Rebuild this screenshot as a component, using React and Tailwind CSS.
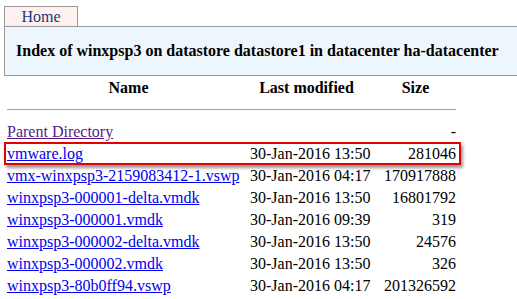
import React from "react";

const rows = [
  { name: "vmx-winxpsp3-2159083412-1.vswp", date: "30-Jan-2016 04:17", size: "170917888" },
  { name: "winxpsp3-000001-delta.vmdk", date: "30-Jan-2016 13:50", size: "16801792" },
  { name: "winxpsp3-000001.vmdk", date: "30-Jan-2016 09:39", size: "319" },
  { name: "winxpsp3-000002-delta.vmdk", date: "30-Jan-2016 13:50", size: "24576" },
  { name: "winxpsp3-000002.vmdk", date: "30-Jan-2016 13:50", size: "326" },
  { name: "winxpsp3-80b0ff94.vswp", date: "30-Jan-2016 04:17", size: "201326592" },
];

function Row({ name, date, size, visited }) {
  return (
    <div className="grid grid-cols-[243px_113px_93px] h-[22px] items-center leading-none whitespace-nowrap">
      <a href="#" className={"underline " + (visited ? "text-[#551a8b]" : "text-[#0000ee]")}>
        {name}
      </a>
      <span>{date}</span>
      <span className="text-right">{size}</span>
    </div>
  );
}

export default function App() {
  return (
    <div className="w-[517px] h-[299px] overflow-hidden bg-white text-black font-['Liberation_Serif',serif] text-[16px]">
      <div className="ml-[4px] mt-[6px] w-[74px] h-[20px] border border-b-0 border-[#999] bg-[#fdf0ef] text-center text-[#1a3a7a] leading-[19px]">
        Home
      </div>
      <div className="ml-[4px] h-[50px] border-t border-l border-b border-[#999] bg-[#eef6fd] flex items-center pl-[11px] font-bold">
        Index of winxpsp3 on datastore datastore1 in datacenter ha-datacenter
      </div>

      <div className="ml-[7px] w-[449px]">
        <div className="grid grid-cols-[243px_113px_93px] mt-[1px] h-[22px] items-center font-bold leading-none text-center whitespace-nowrap">
          <span>Name</span>
          <span>Last modified</span>
          <span className="pl-[12px]">Size</span>
        </div>
        <div className="mt-[10px] h-px bg-[#a0a0a0]"></div>

        <div className="pt-[11px]">
          <div className="grid grid-cols-[243px_113px_93px] h-[22px] items-center leading-none">
            <a href="#" className="underline text-[#551a8b]">Parent Directory</a>
            <span></span>
            <span className="text-right">-</span>
          </div>
          <div className="relative">
            <Row name="vmware.log" date="30-Jan-2016 13:50" size="281046" />
            <div className="absolute -left-[3px] -right-[5px] -top-[1px] bottom-[0px] border-2 border-[#e60000] shadow-[2px_3px_3px_rgba(0,0,0,0.4)]"></div>
          </div>
          {rows.map((r) => (
            <Row key={r.name} {...r} />
          ))}
        </div>
      </div>
    </div>
  );
}
